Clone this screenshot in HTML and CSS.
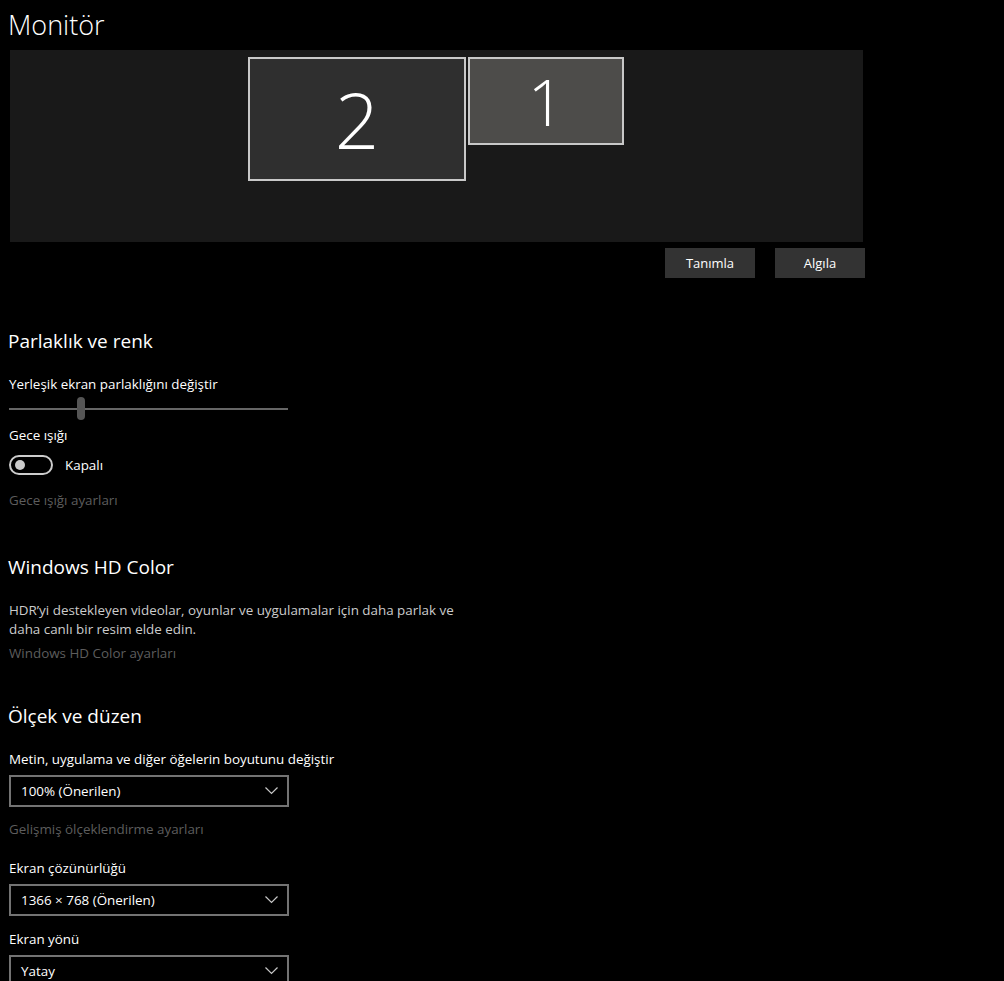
FILE: index.html
```html
<!DOCTYPE html>
<html>
    <head>
        <meta charset="utf-8">
        <title>Monitör</title>

        <link rel="stylesheet" href="styles.css">
    </head>

    <body>

        <div class="page">
            <h1 class="page-title">Monitör</h1>

            <!-- monitor arrangement -->
            <div class="arrange">
                <div class="screen screen-2">2</div>
                <div class="screen screen-1">1</div>
            </div>

            <div class="arrange-buttons">
                <button class="btn">Tanımla</button>
                <button class="btn">Algıla</button>
            </div>

            <h2 class="section-title section-first">Parlaklık ve renk</h2>

            <div class="label">Yerleşik ekran parlaklığını değiştir</div>
            <div class="slider">
                <div class="slider-thumb"></div>
            </div>

            <div class="label label-night">Gece ışığı</div>
            <div class="toggle-row">
                <span class="toggle"><span class="toggle-knob"></span></span>
                <span class="toggle-text">Kapalı</span>
            </div>
            <div class="link">Gece ışığı ayarları</div>

            <h2 class="section-title section-hd">Windows HD Color</h2>
            <p class="desc">HDR’yi destekleyen videolar, oyunlar ve uygulamalar için daha parlak ve<br>daha canlı bir resim elde edin.</p>
            <div class="link link-hd">Windows HD Color ayarları</div>

            <h2 class="section-title section-scale">Ölçek ve düzen</h2>

            <div class="label">Metin, uygulama ve diğer öğelerin boyutunu değiştir</div>
            <div class="select">
                <span>100% (Önerilen)</span>
                <svg class="chevron" width="13" height="8" viewBox="0 0 13 8"><path d="M0.5 0.5 L6.5 6.5 L12.5 0.5" fill="none" stroke="#c8c8c8" stroke-width="1.2"/></svg>
            </div>
            <div class="link link-scale">Gelişmiş ölçeklendirme ayarları</div>

            <div class="label label-res">Ekran çözünürlüğü</div>
            <div class="select">
                <span>1366 × 768 (Önerilen)</span>
                <svg class="chevron" width="13" height="8" viewBox="0 0 13 8"><path d="M0.5 0.5 L6.5 6.5 L12.5 0.5" fill="none" stroke="#c8c8c8" stroke-width="1.2"/></svg>
            </div>

            <div class="label label-orient">Ekran yönü</div>
            <div class="select">
                <span>Yatay</span>
                <svg class="chevron" width="13" height="8" viewBox="0 0 13 8"><path d="M0.5 0.5 L6.5 6.5 L12.5 0.5" fill="none" stroke="#c8c8c8" stroke-width="1.2"/></svg>
            </div>
        </div>

    </body>
</html>
```

FILE: styles.css
```css
/* Settings > Display, dark theme */

body {
    margin: 0;
    background: #000;
    color: #fff;
    font-family: "Open Sans", "Noto Sans", sans-serif;
    font-size: 13.4px;
    overflow: hidden;
}

.page {
    padding-left: 9px;
    height: 981px;
}

.page-title {
    margin: 0 0 0 -1px;
    padding-top: 6px;
    font-size: 27px;
    font-weight: 300;
    line-height: 38px;
    height: 44px;
}

/* Monitor arrangement canvas */

.arrange {
    position: relative;
    margin-left: 1px;
    width: 853px;
    height: 192px;
    background: #191919;
}

.screen {
    position: absolute;
    top: 7px;
    box-sizing: border-box;
    border: 2px solid #c8c8c8;
    display: flex;
    justify-content: center;
    align-items: center;
    font-weight: 300;
    color: #fff;
}

.screen-2 {
    left: 238px;
    width: 218px;
    height: 124px;
    background: #2f2f2f;
    font-size: 78px;
}

.screen-1 {
    left: 458px;
    width: 156px;
    height: 88px;
    background: #4d4c4a;
    font-size: 64px;
}

.arrange-buttons {
    display: flex;
    justify-content: flex-end;
    gap: 20px;
    width: 856px;
    margin-top: 6px;
}

.btn {
    width: 90px;
    height: 30px;
    border: none;
    background: #333;
    color: #fff;
    font-family: inherit;
    font-size: 13px;
    padding: 0;
}

/* Sections */

.section-title {
    margin: 0 0 0 -1px;
    font-size: 19px;
    font-weight: 400;
    line-height: 26px;
}

.section-first {
    margin-top: 50px;
}

.label {
    line-height: 20px;
    margin-top: 12px;
}

.section-title + .label {
    margin-top: 20px;
}

.slider {
    position: relative;
    width: 279px;
    height: 23px;
    margin-top: 3px;
    display: flex;
    align-items: center;
}

.slider::before {
    content: "";
    display: block;
    width: 100%;
    height: 2px;
    background: #666;
}

.slider-thumb {
    position: absolute;
    left: 68px;
    top: 0;
    width: 8px;
    height: 23px;
    border-radius: 4px;
    background: #555;
}

.label-night {
    margin-top: 5px;
}

.toggle-row {
    display: flex;
    align-items: center;
    gap: 12px;
    margin-top: 10px;
}

.toggle {
    box-sizing: border-box;
    width: 44px;
    height: 20px;
    border: 2px solid #ccc;
    border-radius: 10px;
    display: flex;
    align-items: center;
    padding-left: 4px;
}

.toggle-knob {
    width: 10px;
    height: 10px;
    border-radius: 50%;
    background: #ccc;
}

.link {
    color: #5d5d5d;
    line-height: 20px;
    margin-top: 15px;
}

.section-hd {
    margin-top: 44px;
}

.desc {
    margin: 21px 0 0;
    line-height: 19px;
    color: #ccc;
}

.link-hd {
    margin-top: 4px;
}

.section-scale {
    margin-top: 40px;
}

.select {
    box-sizing: border-box;
    display: flex;
    align-items: center;
    justify-content: space-between;
    width: 280px;
    height: 32px;
    margin-top: 6px;
    padding: 0 9px 0 10px;
    border: 2px solid #737373;
}

.link-scale {
    margin-top: 12px;
}

.label-res {
    margin-top: 19px;
}

.label-orient {
    margin-top: 13px;
}
```
